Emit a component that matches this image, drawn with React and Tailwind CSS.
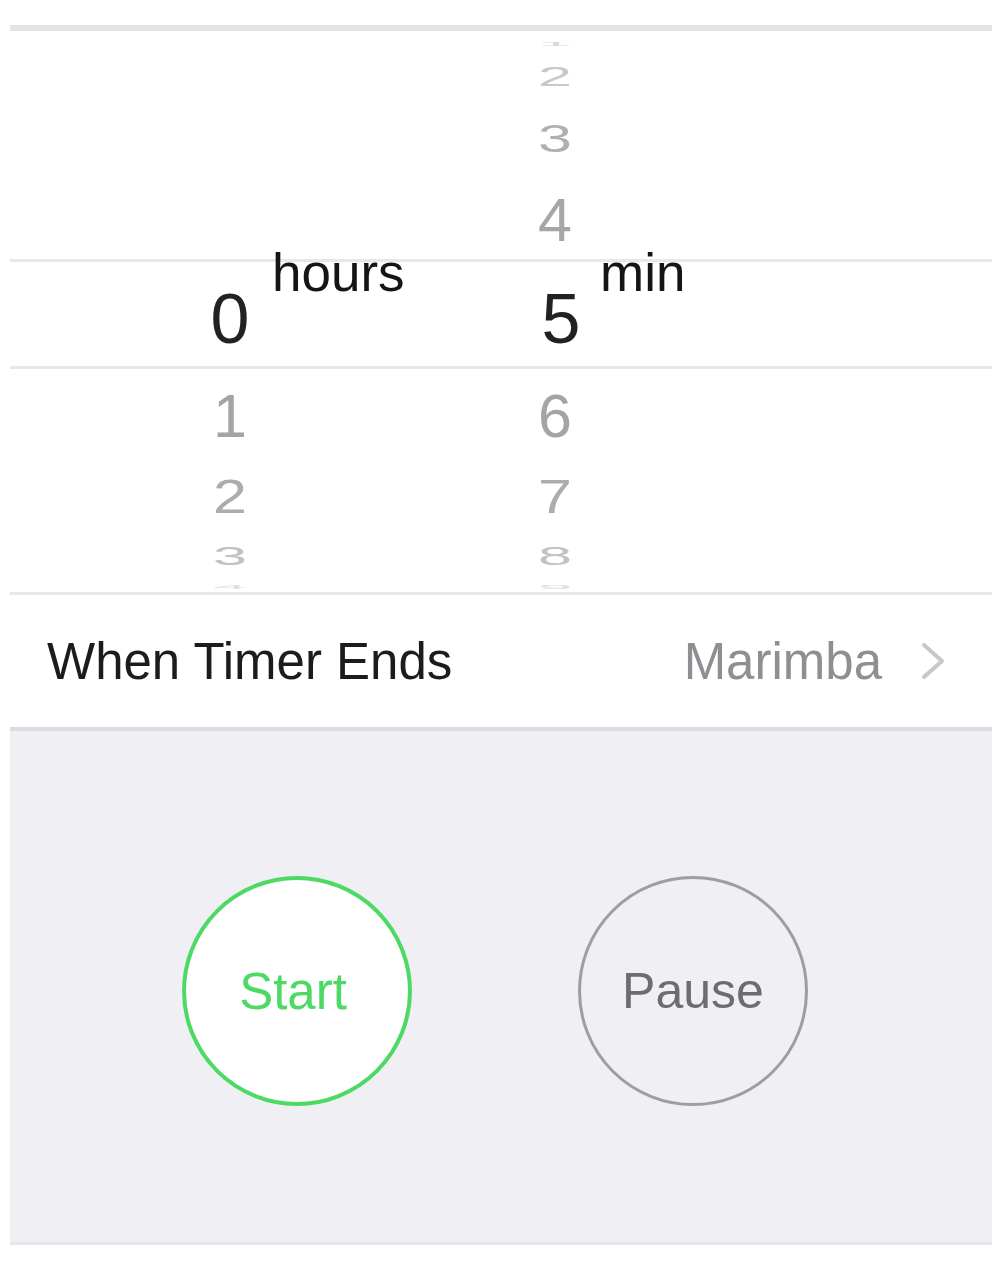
import React from "react";

const hourRows = [
  { h: "h-[26px]", hours: "", min: "1", scale: "scale-y-[0.08]", color: "text-[#dadada]" },
  { h: "h-[38px]", hours: "", min: "2", scale: "scale-y-[0.45]", color: "text-[#c8c8c8]" },
  { h: "h-[86px]", hours: "", min: "3", scale: "scale-y-[0.64]", color: "text-[#b0b0b0]" },
  { h: "h-[78px]", hours: "", min: "4", scale: "scale-y-100", color: "text-[#a6a6a6]" },
];

const lowerRows = [
  { h: "h-[94px]", hours: "1", min: "6", scale: "scale-y-100", color: "text-[#a4a4a4]" },
  { h: "h-[66px]", hours: "2", min: "7", scale: "scale-y-[0.8]", color: "text-[#acacac]" },
  { h: "h-[54px]", hours: "3", min: "8", scale: "scale-y-[0.41]", color: "text-[#c2c2c2]" },
  { h: "h-[9px]", hours: "4", min: "9", scale: "scale-y-[0.08]", color: "text-[#dedede]" },
];

function WheelRow({ row }) {
  return (
    <div className={`flex items-center pl-[180px] ${row.h}`}>
      <div className="w-[325px]">
        <div className={`w-[80px] text-center text-[61px] leading-none ${row.color} ${row.scale}`}>
          {row.hours}
        </div>
      </div>
      <div className={`w-[80px] text-center text-[61px] leading-none ${row.color} ${row.scale}`}>
        {row.min}
      </div>
    </div>
  );
}

function Picker() {
  return (
    <div className="h-[561px] overflow-hidden">
      {hourRows.map((row, i) => (
        <WheelRow key={"t" + i} row={row} />
      ))}
      <div className="flex h-[110px] items-end border-y-[3px] border-[#e8e8e8] pb-[12px] pl-[180px] text-[#151515]">
        <div className="flex w-[325px] items-end">
          <div className="w-[80px] text-center text-[70px] leading-none text-[#222]">0</div>
          <span className="mb-[55px] ml-[2px] text-[53px] leading-none">hours</span>
        </div>
        <div className="flex items-end">
          <div className="w-[80px] pl-3 text-center text-[70px] leading-none text-[#222]">5</div>
          <span className="mb-[55px] ml-[5px] text-[53px] leading-none">min</span>
        </div>
      </div>
      {lowerRows.map((row, i) => (
        <WheelRow key={"b" + i} row={row} />
      ))}
    </div>
  );
}

export default function App() {
  return (
    <div className="min-h-[1268px] bg-white pt-[25px] pl-[10px] font-['Liberation_Sans',Arial,sans-serif]">
      <div className="w-[982px]">
        <div className="h-[6px] bg-[#e4e4e4]" />
        <Picker />
        <div className="flex h-[139px] items-center justify-between border-t-[3px] border-b-[4px] border-t-[#e8e8e8] border-b-[#dcdce0] pl-[37px] pr-[46px]">
          <span className="text-[51px] leading-none text-[#1c1c1c]">When Timer Ends</span>
          <div className="flex items-center">
            <span className="text-[51px] leading-none text-[#8e8e93]">Marimba</span>
            <svg className="ml-[38px]" width="26" height="38" viewBox="0 0 26 38" fill="none">
              <polyline points="4,3 22,19 4,35" stroke="#c7c7cc" strokeWidth="4" strokeLinecap="round" strokeLinejoin="round" />
            </svg>
          </div>
        </div>
        <div className="flex h-[514px] items-start gap-[166px] border-b-[3px] border-[#e6e6ea] bg-[#efeff4] pt-[145px] pl-[172px]">
          <button className="flex h-[230px] w-[230px] items-center justify-center rounded-full border-4 border-[#4cd964] bg-white pr-2 text-[51px] leading-none text-[#4cd964]">
            Start
          </button>
          <button className="flex h-[230px] w-[230px] items-center justify-center rounded-full border-[3px] border-[#9e9e9e] text-[50px] leading-none text-[#6d6d6d]">
            Pause
          </button>
        </div>
      </div>
    </div>
  );
}
